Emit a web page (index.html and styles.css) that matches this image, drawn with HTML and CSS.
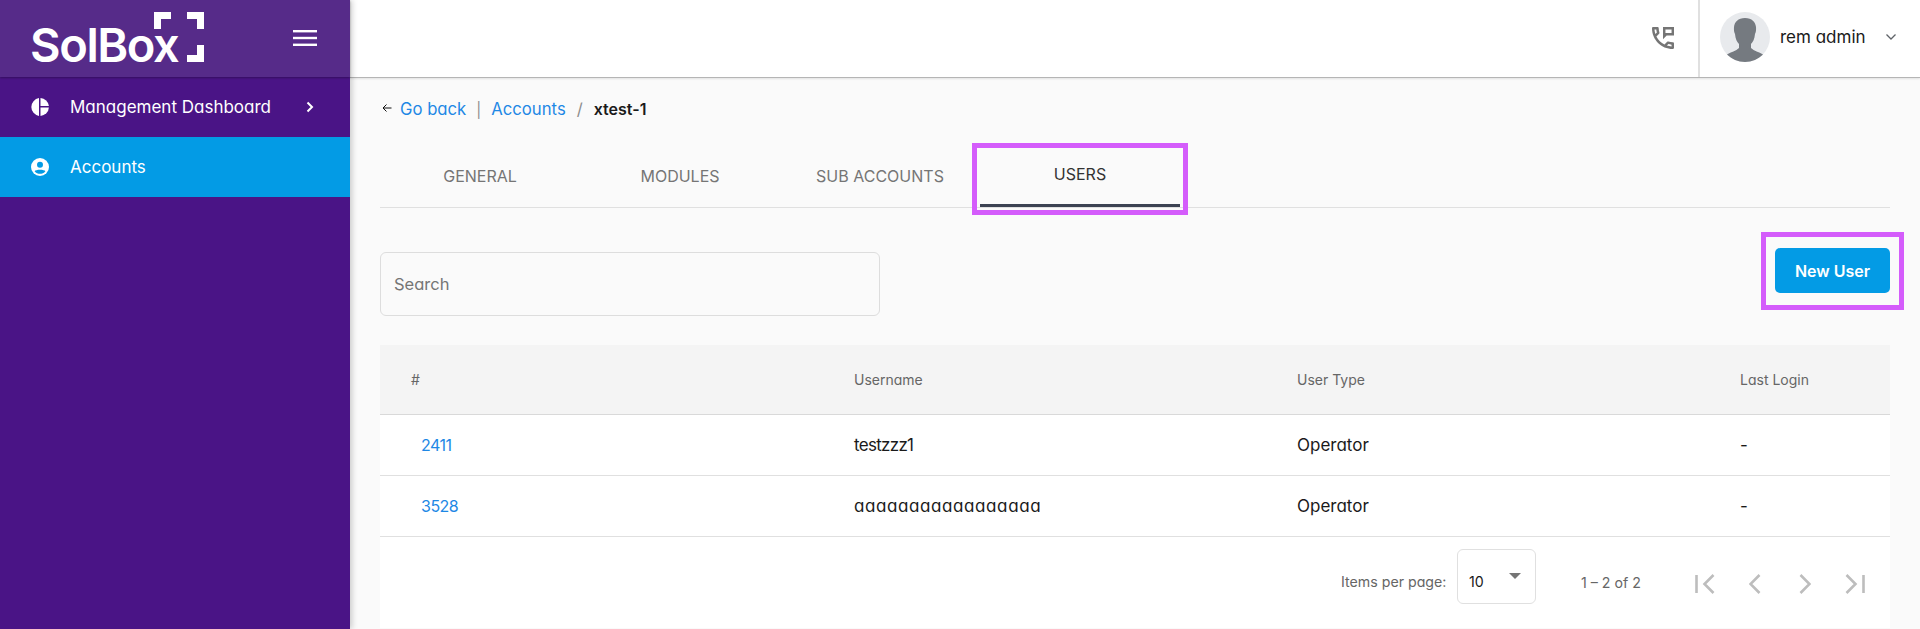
FILE: index.html
```html
<!DOCTYPE html>
<html lang="en">
<head>
    <meta charset="UTF-8">
    <meta name="viewport" content="width=device-width, initial-scale=1.0">
    <title>Accounts - Users</title>
    <link rel="stylesheet" href="styles.css">
</head>
<body>
    <div class="shell">
        <aside class="sidebar">
            <div class="brand">
                <div class="logo">
                    <span class="logo-text">SolBox</span>
                    <svg class="logo-marks" width="50" height="50" viewBox="0 0 50 50" fill="#fff">
                        <path d="M0 0H17V7H7V17H0Z"/>
                        <path d="M33 0H50V17H43V7H33Z"/>
                        <path d="M50 33V50H33V43H43V33Z"/>
                    </svg>
                </div>
                <svg class="burger" width="24" height="16" viewBox="0 0 24 16" fill="#fff">
                    <rect y="0" width="24" height="2.4"/>
                    <rect y="6.8" width="24" height="2.4"/>
                    <rect y="13.6" width="24" height="2.4"/>
                </svg>
            </div>
            <nav>
                <a class="nav-item" href="#">
                    <svg class="nav-icon" width="18" height="18" viewBox="0 0 18 18" fill="#fff">
                        <path d="M8 0.1V17.9A9 9 0 0 1 8 0.1Z"/>
                        <path d="M9.5 0.1A9 9 0 0 1 17.9 8H9.5Z"/>
                        <path d="M9.5 9.5H17.9A9 9 0 0 1 9.5 17.9Z"/>
                    </svg>
                    <span class="nav-label">Management Dashboard</span>
                    <svg class="nav-arrow" width="8" height="12" viewBox="0 0 8 12" fill="none" stroke="#fff" stroke-width="2">
                        <path d="M1.5 1.5L6 6L1.5 10.5"/>
                    </svg>
                </a>
                <a class="nav-item active" href="#">
                    <svg class="nav-icon" width="18" height="18" viewBox="0 0 18 18">
                        <circle cx="9" cy="9" r="9" fill="#fff"/>
                        <circle cx="9" cy="6.8" r="3" fill="#039be5"/>
                        <path d="M3.6 13.2C4.6 11.2 13.4 11.2 14.4 13.2C13 15 11 15.8 9 15.8C7 15.8 5 15 3.6 13.2Z" fill="#039be5"/>
                    </svg>
                    <span class="nav-label">Accounts</span>
                </a>
            </nav>
        </aside>

        <div class="page">
            <header class="topbar">
                <svg class="phone" width="22" height="22" viewBox="3 3 18 18" fill="#757575">
                    <path d="M20 15.5c-1.25 0-2.45-.2-3.57-.57-.1-.03-.21-.05-.31-.05-.26 0-.51.1-.71.29l-2.2 2.2c-2.83-1.45-5.15-3.76-6.59-6.59l2.2-2.21c.28-.26.36-.65.25-1C8.7 6.45 8.5 5.25 8.5 4c0-.55-.45-1-1-1H4c-.55 0-1 .45-1 1 0 9.39 7.61 17 17 17 .55 0 1-.45 1-1v-3.5c0-.55-.45-1-1-1zM5.03 5h1.5c.07.88.22 1.75.45 2.58l-1.2 1.21c-.4-1.21-.66-2.47-.75-3.79zM19 18.97c-1.32-.09-2.6-.35-3.8-.76l1.2-1.2c.85.24 1.72.39 2.6.45v1.51zM12 3v10l3-3h6V3h-9zm7 5h-5V5h5v3z"/>
                </svg>
                <div class="user">
                    <svg class="avatar" width="50" height="50" viewBox="0 0 50 50">
                        <circle cx="25" cy="25" r="25" fill="#e8eaed"/>
                        <path d="M25 6C18 6 14.500 10 14 15C13.800 18 14 20 15 22C15.500 27 17 30 19 32V36C16 39 11 40 7 42.500C11.500 47 18 50 25 50C32 50 38.500 47 43 42.500C39 40 34 39 31 36V32C33 30 34.500 27 35 22C36 20 36.200 18 36 15C35.500 10 32 6 25 6Z" fill="#757a80"/>
                    </svg>
                    <span class="user-name">rem admin</span>
                    <svg class="user-caret" width="12" height="8" viewBox="0 0 12 8" fill="none" stroke="#5f6368" stroke-width="1.3">
                        <path d="M1.500 1.500L6 6L10.500 1.500"/>
                    </svg>
                </div>
            </header>

            <main class="content">
                <div class="crumbs">
                    <svg class="crumb-back" width="10" height="10" viewBox="0 0 10 10" fill="none" stroke="#111" stroke-width="1">
                        <path d="M9.500 5H1M4.500 1.500L1 5L4.500 8.500"/>
                    </svg>
                    <a href="#">Go back</a>
                    <span class="crumb-pipe">|</span>
                    <a href="#">Accounts</a>
                    <span class="crumb-sep">/</span>
                    <strong>xtest-1</strong>
                </div>

                <div class="tabs">
                    <div class="tab">GENERAL</div>
                    <div class="tab">MODULES</div>
                    <div class="tab">SUB ACCOUNTS</div>
                    <div class="tab current">USERS</div>
                    <span class="mark mark-tab"></span>
                </div>

                <div class="toolbar">
                    <div class="search">Search</div>
                    <button class="new-user">New User</button>
                    <span class="mark mark-button"></span>
                </div>

                <div class="table">
                    <div class="row head">
                        <div>#</div>
                        <div>Username</div>
                        <div>User Type</div>
                        <div>Last Login</div>
                    </div>
                    <div class="row">
                        <div class="id"><a href="#">2411</a></div>
                        <div class="tight">testzzz1</div>
                        <div>Operator</div>
                        <div>-</div>
                    </div>
                    <div class="row">
                        <div class="id"><a href="#">3528</a></div>
                        <div class="wide">aaaaaaaaaaaaaaaaa</div>
                        <div>Operator</div>
                        <div>-</div>
                    </div>
                    <div class="pager">
                        <span class="pager-label">Items per page:</span>
                        <div class="pager-select">
                            <span>10</span>
                            <i class="pager-caret"></i>
                        </div>
                        <span class="pager-range">1 – 2 of 2</span>
                        <div class="pager-btns">
                            <span class="pager-btn"><svg width="20" height="24" viewBox="0 0 20 24" fill="none" stroke="#bdbdbd" stroke-width="2.6"><path d="M1.500 3V21M18.500 3L9.500 12L18.500 21"/></svg></span>
                            <span class="pager-btn"><svg width="12" height="24" viewBox="0 0 12 24" fill="none" stroke="#bdbdbd" stroke-width="2.6"><path d="M10.500 3L1.500 12L10.500 21"/></svg></span>
                            <span class="pager-btn"><svg width="12" height="24" viewBox="0 0 12 24" fill="none" stroke="#bdbdbd" stroke-width="2.6"><path d="M1.500 3L10.500 12L1.500 21"/></svg></span>
                            <span class="pager-btn"><svg width="20" height="24" viewBox="0 0 20 24" fill="none" stroke="#bdbdbd" stroke-width="2.6"><path d="M1.500 3L10.500 12L1.500 21M18.500 3V21"/></svg></span>
                        </div>
                    </div>
                </div>
            </main>
        </div>
    </div>
</body>
</html>
```

FILE: styles.css
```css
* {
    box-sizing: border-box;
}
body {
    margin: 0;
    font-family: 'Inter', 'Noto Sans', sans-serif;
    font-feature-settings: "cv11";
    font-size: 15px;
    color: #1a1a1a;
    background: #fafafa;
    overflow: hidden;
}
a {
    color: #1e88e5;
    text-decoration: none;
}
.shell {
    display: flex;
    height: 629px;
}

/* sidebar */
.sidebar {
    width: 350px;
    flex: none;
    background: #4a1486;
    box-shadow: 2px 0 6px rgba(0, 0, 0, 0.2);
    z-index: 2;
}
.brand {
    height: 77px;
    display: flex;
    align-items: center;
    justify-content: space-between;
    padding: 0 33px 0 30px;
    background: #562b89;
    box-shadow: 0 1px 2px rgba(0, 0, 0, 0.3);
}
.logo {
    display: flex;
    align-items: flex-end;
    height: 50px;
    margin-bottom: 3px;
}
.logo-text {
    font-size: 47px;
    font-weight: 600;
    line-height: 48px;
    letter-spacing: -1.4px;
    color: #fff;
    margin-right: -24px;
    margin-bottom: -7px;
}
.logo-marks {
    display: block;
}
.burger {
    margin-bottom: 1px;
}
.nav-item {
    height: 60px;
    display: flex;
    align-items: center;
    padding: 0 36px 0 31px;
    color: #fff;
    font-size: 17px;
}
.nav-item.active {
    background: #039be5;
}
.nav-icon {
    flex: none;
    margin-right: 21px;
}
.nav-label {
    flex: 1;
}

/* top bar */
.page {
    flex: 1;
    min-width: 0;
    display: flex;
    flex-direction: column;
}
.topbar {
    height: 78px;
    flex: none;
    display: flex;
    justify-content: flex-end;
    align-items: stretch;
    background: #fff;
    border-bottom: 1px solid #b5b5b5;
    box-shadow: 0 1px 2px rgba(0, 0, 0, 0.1);
}
.phone {
    align-self: center;
    margin-right: 24px;
    margin-bottom: 1px;
}
.user {
    width: 222px;
    display: flex;
    align-items: center;
    padding: 0 0 3px 20px;
    border-left: 2px solid #e0e0e0;
}
.avatar {
    flex: none;
}
.user-name {
    margin-left: 10px;
    font-size: 17px;
}
.user-caret {
    margin-left: 19px;
}

/* content */
.content {
    flex: 1;
    padding: 0 30px;
}
.crumbs {
    height: 62px;
    display: flex;
    align-items: center;
    font-size: 16.7px;
    padding-left: 2px;
}
.crumb-back {
    margin-right: 8px;
    margin-bottom: 3px;
}
.crumb-pipe {
    margin: 0 10px;
    color: #8d8d8d;
    font-size: 15px;
}
.crumb-sep {
    margin: 0 11px;
    color: #8d8d8d;
}
.crumbs strong {
    font-weight: 600;
    font-size: 16px;
}
.tabs {
    position: relative;
    display: flex;
    height: 68px;
    border-bottom: 1px solid #e0e0e0;
}
.tab {
    width: 200px;
    display: flex;
    align-items: center;
    justify-content: center;
    padding-top: 4px;
    color: #757575;
    font-size: 16px;
}
.tab.current {
    color: #333;
    border-bottom: 3px solid #3c4252;
}
.mark {
    position: absolute;
    border: 5px solid #d45cfb;
}
.mark-tab {
    left: 592px;
    top: 3px;
    width: 216px;
    height: 72px;
}
.toolbar {
    position: relative;
    height: 137px;
    display: flex;
    justify-content: space-between;
    align-items: flex-start;
}
.search {
    width: 500px;
    height: 64px;
    margin-top: 44px;
    padding-left: 13px;
    display: flex;
    align-items: center;
    border: 1px solid #ddd;
    border-radius: 6px;
    color: #757575;
    font-size: 16.5px;
}
.new-user {
    width: 115px;
    height: 45px;
    margin-top: 40px;
    border: none;
    border-radius: 5px;
    background: #039be5;
    color: #fff;
    font-family: inherit;
    font-size: 16px;
    font-weight: 600;
}
.mark-button {
    right: -14px;
    top: 24px;
    width: 143px;
    height: 78px;
}

/* table */
.table {
    background: #fff;
    height: 283px;
}
.row {
    display: grid;
    grid-template-columns: 443px 443px 443px 181px;
    align-items: center;
    height: 61px;
    border-bottom: 1px solid #e0e0e0;
    font-size: 17px;
}
.row > div {
    padding-left: 31px;
}
.row > .id {
    padding-left: 41px;
    font-size: 16px;
    letter-spacing: -0.5px;
}
.row > .tight {
    letter-spacing: -0.7px;
}
.row > .wide {
    letter-spacing: 0.6px;
}
.head {
    height: 70px;
    background: #f4f4f4;
    color: #666;
    font-size: 14px;
    border-bottom: 1px solid #d9d9d9;
}
.pager {
    height: 91px;
    display: flex;
    align-items: flex-start;
    padding: 12px 0 0 961px;
    font-size: 14.2px;
    color: #666;
}
.pager-label {
    width: 116px;
    margin-top: 24px;
}
.pager-select {
    width: 79px;
    height: 55px;
    padding: 9px 11px 0;
    display: flex;
    align-items: center;
    justify-content: space-between;
    border: 1px solid #e0e0e0;
    border-radius: 6px;
    color: #1a1a1a;
}
.pager-caret {
    width: 0;
    height: 0;
    margin: 0 3px 11px 0;
    border-left: 6px solid transparent;
    border-right: 6px solid transparent;
    border-top: 6px solid #757575;
}
.pager-range {
    margin: 25px 0 0 45px;
    width: 99px;
}
.pager-btns {
    display: flex;
    margin-top: 23px;
}
.pager-btn {
    width: 50px;
    height: 24px;
    display: flex;
    justify-content: center;
}
```
